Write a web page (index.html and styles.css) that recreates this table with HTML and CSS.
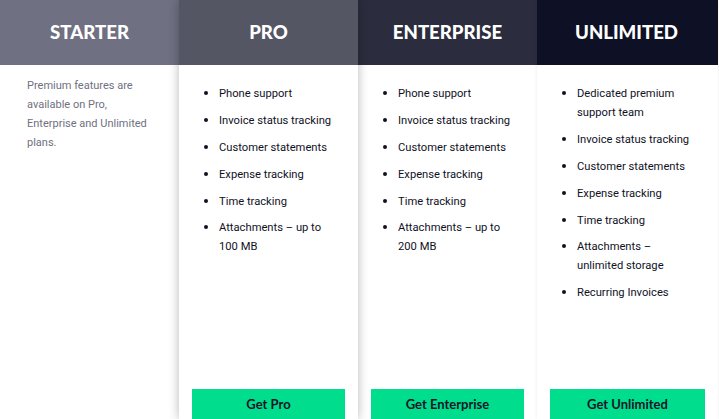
FILE: index.html
```html
<!DOCTYPE html>
<html>
<head>
<meta charset="utf-8">
<link rel="stylesheet" href="styles.css">
</head>
<body>
<div class="plans">
  <div class="plan starter">
    <div class="head">STARTER</div>
    <p class="note">Premium features are available on Pro, Enterprise and Unlimited plans.</p>
  </div>
  <div class="plan pro">
    <div class="head">PRO</div>
    <ul class="feats">
      <li>Phone support</li>
      <li>Invoice status tracking</li>
      <li>Customer statements</li>
      <li>Expense tracking</li>
      <li>Time tracking</li>
      <li>Attachments – up to 100 MB</li>
    </ul>
    <a class="btn">Get Pro</a>
  </div>
  <div class="plan enterprise">
    <div class="head">ENTERPRISE</div>
    <ul class="feats">
      <li>Phone support</li>
      <li>Invoice status tracking</li>
      <li>Customer statements</li>
      <li>Expense tracking</li>
      <li>Time tracking</li>
      <li>Attachments – up to 200 MB</li>
    </ul>
    <a class="btn">Get Enterprise</a>
  </div>
  <div class="plan unlimited">
    <div class="head">UNLIMITED</div>
    <ul class="feats">
      <li>Dedicated premium support team</li>
      <li>Invoice status tracking</li>
      <li>Customer statements</li>
      <li>Expense tracking</li>
      <li>Time tracking</li>
      <li>Attachments – unlimited storage</li>
      <li>Recurring Invoices</li>
    </ul>
    <a class="btn">Get Unlimited</a>
  </div>
</div>
</body>
</html>
```
FILE: styles.css
```css
html, body {
  margin: 0;
  padding: 0;
  height: 100%;
  overflow: hidden;
  background: #fff;
}
.plans {
  display: grid;
  grid-template-columns: 179px 179px 179px 181px;
  height: 419px;
  width: 719px;
}
.plan {
  display: flex;
  flex-direction: column;
  background: #fff;
  position: relative;
  min-width: 0;
}
.head {
  height: 65px;
  display: flex;
  align-items: center;
  justify-content: center;
  color: #fff;
  font-family: Lato, "Liberation Sans", sans-serif;
  font-weight: 900;
  font-size: 18.6px;
  padding-bottom: 1px;
  box-sizing: border-box;
}
.starter { z-index: 1; }
.starter .head { background: #6f7081; }
.pro { z-index: 4; box-shadow: 0 0 10px rgba(0, 0, 0, 0.28); }
.pro .head { background: #545664; }
.enterprise { z-index: 2; }
.enterprise .head { background: #2b2d3e; }
.unlimited { z-index: 3; box-shadow: 0 0 4px rgba(0, 0, 0, 0.08); }
.unlimited .head { background: #0e1026; padding-right: 2px; }
.note {
  margin: 11px 26px 0 27px;
  font-family: Roboto, "Liberation Sans", sans-serif;
  font-size: 11px;
  line-height: 19px;
  color: #6f7081;
}
.feats {
  margin: 18px 25px 0 27px;
  padding: 0 0 0 13px;
  font-family: Roboto, "Liberation Sans", sans-serif;
  font-size: 11.2px;
  line-height: 19px;
  color: #10121f;
}
.unlimited .feats {
  margin-right: 27px;
}
.feats li {
  margin-bottom: 6.9px;
}
.feats li::marker {
  font-size: 13px;
}
.btn {
  margin: auto 13px 0 13px;
  height: 30px;
  display: flex;
  align-items: center;
  justify-content: center;
  background: #00dd8c;
  color: #141628;
  font-family: Lato, "Liberation Sans", sans-serif;
  font-weight: 700;
  font-size: 13px;
}
```
